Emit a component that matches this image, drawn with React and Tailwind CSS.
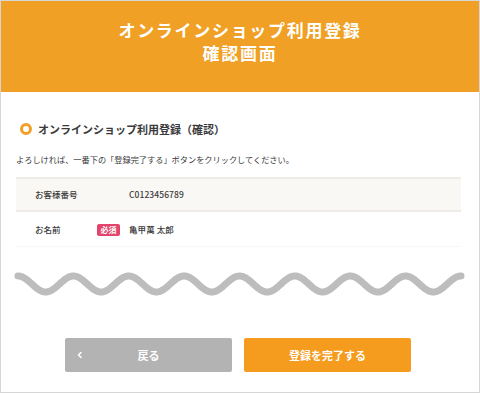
const jp = { fontFamily: '"Noto Sans CJK JP", "Noto Sans", sans-serif' }

const rows = [
  { label: 'お客様番号', value: 'C0123456789', required: false, bg: 'bg-[#faf8f5]' },
  { label: 'お名前', value: '亀甲萬 太郎', required: true, bg: 'bg-white' },
]

// sine wave, peak to peak, 8 periods
const wavePath = (() => {
  const x0 = 17
  const x1 = 460
  const cy = 30
  const amp = 8
  const period = (x1 - x0) / 8
  const pts = []
  for (let x = x0; x <= x1 + 0.01; x += 1) {
    const y = cy - amp * Math.cos(((x - x0) / period) * Math.PI * 2)
    pts.push(`${pts.length ? 'L' : 'M'}${x.toFixed(1)} ${y.toFixed(2)}`)
  }
  return pts.join(' ')
})()

export default function App() {
  return (
    <div className="w-[480px] h-[393px] border border-[#d6d6d6] bg-white flex flex-col overflow-hidden text-[#3a3a3a]" style={jp}>
      {/* Header */}
      <div className="h-[91px] shrink-0 bg-[#f0a024] flex flex-col items-center pt-[17px] text-white font-bold text-[17px] leading-[23px] tracking-[0.1em]">
        <div>オンラインショップ利用登録</div>
        <div>確認画面</div>
      </div>

      <div className="px-[15px]">
        {/* Section title */}
        <div className="mt-[29px] flex items-center h-[16px]">
          <span className="ml-[4px] w-[12px] h-[12px] rounded-full border-[3px] border-[#f0a024]" />
          <span className="ml-[6px] text-[11px] font-bold leading-[16px]">オンラインショップ利用登録（確認）</span>
        </div>

        <p className="mt-[16px] text-[8.2px] leading-[12px]">
          よろしければ、一番下の「登録完了する」ボタンをクリックしてください。
        </p>

        {/* Table */}
        <div className="mt-[12px] w-[445px]">
          {rows.map((row, i) => (
            <div
              key={row.label}
              className={`h-[35px] flex items-center text-[8.5px] font-medium ${row.bg} ${i === 0 ? 'border-y-2 border-[#efebe6]' : 'border-b border-dotted border-[#f2f2f2]'}`}
            >
              <div className="w-[81px] pl-[19px]">{row.label}</div>
              <div className="w-[32px]">
                {row.required && (
                  <span className="inline-flex items-center justify-center w-[23px] h-[12px] rounded-[2px] bg-[#e4446b] text-white text-[8px] font-bold leading-none">
                    必須
                  </span>
                )}
              </div>
              <div className="tracking-[0.01em]">{row.value}</div>
            </div>
          ))}
        </div>
      </div>

      {/* Wave */}
      <svg className="block shrink-0 mt-[7px]" width="478" height="50" viewBox="0 0 478 50">
        <path d={wavePath} fill="none" stroke="#bdbdbd" strokeWidth="7" strokeLinecap="round" strokeLinejoin="round" />
      </svg>

      {/* Buttons */}
      <div className="mt-[34px] ml-[64px] flex gap-[12px]">
        <button className="relative w-[167px] h-[34px] rounded-[2px] bg-[#b3b3b3] text-white text-[11px] font-bold flex items-center justify-center">
          <svg className="absolute left-[12px] top-1/2 -translate-y-1/2" width="5" height="7" viewBox="0 0 5 7">
            <path d="M4 1 L1.5 3.5 L4 6" fill="none" stroke="white" strokeWidth="1.6" strokeLinecap="round" strokeLinejoin="round" />
          </svg>
          戻る
        </button>
        <button className="w-[167px] h-[34px] rounded-[2px] bg-[#f59b1e] text-white text-[11px] font-bold flex items-center justify-center">
          登録を完了する
        </button>
      </div>
    </div>
  )
}
